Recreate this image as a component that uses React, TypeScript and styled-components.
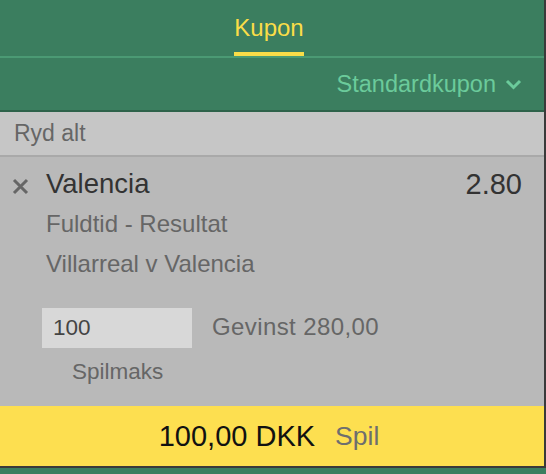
import styled, { createGlobalStyle } from "styled-components";

const GlobalStyle = createGlobalStyle`
  html, body {
    margin: 0;
    padding: 0;
    background: #3b7e5f;
  }
  body {
    font-family: "Liberation Sans", Arial, sans-serif;
  }
`;

const Panel = styled.div`
  width: 544px;
  border-right: 2px solid #3a3a3a;
  border-bottom: 2px solid #3a3a3a;
  display: flex;
  flex-direction: column;
`;

const TabBar = styled.div`
  height: 56px;
  display: flex;
  justify-content: center;
  background: #3b7e5f;
  border-bottom: 2px solid #4b9a74;
  padding-right: 6px;
`;

const Tab = styled.div<{ $active?: boolean }>`
  height: 56px;
  box-sizing: border-box;
  padding-top: 13px;
  font-size: 24px;
  line-height: 30px;
  color: ${(p) => (p.$active ? "#fadd48" : "#cfe6da")};
  border-bottom: 4px solid ${(p) => (p.$active ? "#fadd48" : "transparent")};
`;

const KuponType = styled.div`
  height: 52px;
  background: #3b7e5f;
  border-bottom: 2px solid #2d624a;
  display: flex;
  align-items: center;
  justify-content: flex-end;
  gap: 9px;
  padding-right: 22px;
  color: #6bcb9b;
  font-size: 23.5px;
`;

const ClearBar = styled.div`
  height: 43px;
  background: #c6c6c6;
  border-bottom: 2px solid #a9a9a9;
  display: flex;
  align-items: center;
  padding-left: 14px;
  font-size: 23px;
  color: #666;
`;

const Body = styled.div`
  height: 249px;
  box-sizing: border-box;
  background: #b9b9b9;
  padding-top: 7px;
`;

const SelectionRow = styled.div`
  display: flex;
  align-items: center;
  height: 40px;
  padding-right: 22px;
`;

const RemoveBtn = styled.div`
  width: 46px;
  display: flex;
  justify-content: flex-start;
  padding-left: 12px;
  box-sizing: border-box;
  padding-top: 5px;
`;

const Name = styled.div`
  flex: 1;
  font-size: 27.5px;
  color: #333;
`;

const Odds = styled.div`
  font-size: 29px;
  color: #333;
`;

const Detail = styled.div`
  height: 40px;
  line-height: 40px;
  padding-left: 46px;
  font-size: 24px;
  color: #666;
`;

const StakeRow = styled.div`
  display: flex;
  align-items: center;
  gap: 20px;
  margin-top: 24px;
  padding-left: 42px;
`;

const StakeInput = styled.div`
  width: 150px;
  height: 40px;
  box-sizing: border-box;
  background: #d8d8d8;
  padding-left: 11px;
  display: flex;
  align-items: center;
  font-size: 22.5px;
  color: #444;
`;

const Returns = styled.div`
  font-size: 24px;
  letter-spacing: 0.4px;
  color: #666;
  margin-top: -3px;
`;

const MaxLink = styled.div`
  height: 40px;
  line-height: 40px;
  margin-top: 4px;
  padding-left: 72px;
  font-size: 22.5px;
  color: #666;
`;

const Footer = styled.div`
  height: 60px;
  background: #fddf50;
  display: flex;
  align-items: center;
  justify-content: center;
  gap: 20px;
  padding-right: 6px;
`;

const Total = styled.span`
  font-size: 29px;
  color: #111;
`;

const PlaceBet = styled.span`
  font-size: 26.5px;
  color: #6e6e6e;
`;

function Chevron() {
  return (
    <svg width="17" height="11" viewBox="0 0 17 11">
      <path d="M2 2 L8.5 8.5 L15 2" fill="none" stroke="#6bcb9b" strokeWidth="3" />
    </svg>
  );
}

function Cross() {
  return (
    <svg width="17" height="17" viewBox="0 0 17 17">
      <path d="M2 2 L15 15 M15 2 L2 15" fill="none" stroke="#666" strokeWidth="3" />
    </svg>
  );
}

export default function App() {
  return (
    <>
      <GlobalStyle />
      <Panel>
        <TabBar>
          <Tab $active>Kupon</Tab>
        </TabBar>
        <KuponType>
          <span>Standardkupon</span>
          <Chevron />
        </KuponType>
        <ClearBar>Ryd alt</ClearBar>
        <Body>
          <SelectionRow>
            <RemoveBtn>
              <Cross />
            </RemoveBtn>
            <Name>Valencia</Name>
            <Odds>2.80</Odds>
          </SelectionRow>
          <Detail>Fuldtid - Resultat</Detail>
          <Detail>Villarreal v Valencia</Detail>
          <StakeRow>
            <StakeInput>100</StakeInput>
            <Returns>Gevinst 280,00</Returns>
          </StakeRow>
          <MaxLink>Spilmaks</MaxLink>
        </Body>
        <Footer>
          <Total>100,00 DKK</Total>
          <PlaceBet>Spil</PlaceBet>
        </Footer>
      </Panel>
    </>
  );
}
